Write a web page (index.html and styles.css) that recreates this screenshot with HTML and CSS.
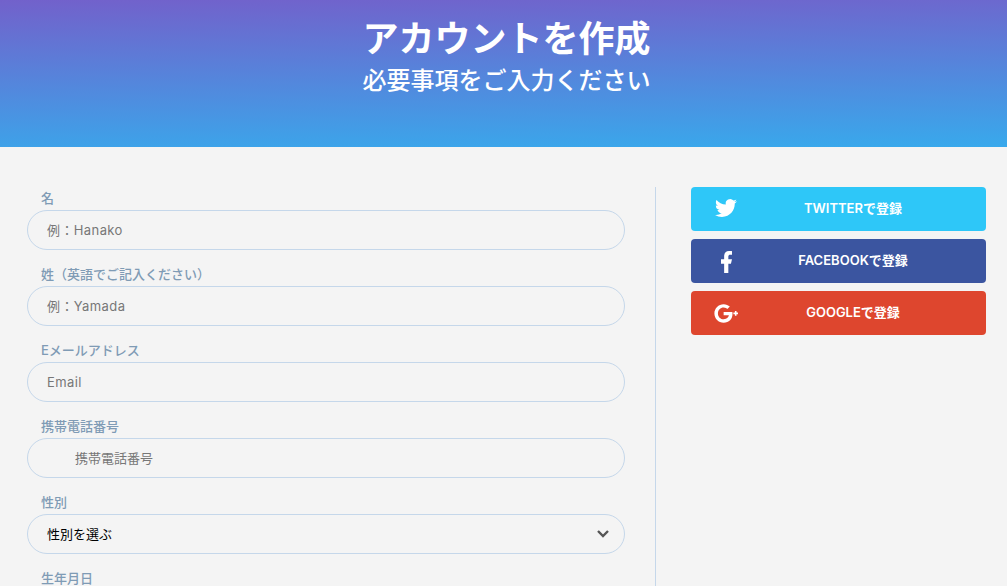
FILE: index.html
```html
<!DOCTYPE html>
<html lang="ja">
<head>
<meta charset="utf-8">
<title>アカウントを作成</title>
<link rel="stylesheet" href="styles.css">
</head>
<body>
<header class="hero">
  <h1 class="hero-title">アカウントを作成</h1>
  <p class="hero-sub">必要事項をご入力ください</p>
</header>
<main class="page">
  <form class="form-col">
    <div class="field">
      <label class="field-label">名</label>
      <input class="field-input" type="text" placeholder="例：Hanako">
    </div>
    <div class="field">
      <label class="field-label">姓（英語でご記入ください）</label>
      <input class="field-input" type="text" placeholder="例：Yamada">
    </div>
    <div class="field">
      <label class="field-label">Eメールアドレス</label>
      <input class="field-input" type="text" placeholder="Email">
    </div>
    <div class="field">
      <label class="field-label">携帯電話番号</label>
      <input class="field-input field-input-phone" type="text" placeholder="携帯電話番号">
    </div>
    <div class="field">
      <label class="field-label">性別</label>
      <div class="select-wrap">
        <select class="field-input field-select">
          <option>性別を選ぶ</option>
        </select>
        <svg class="select-chevron" viewBox="0 0 14 10" aria-hidden="true"><path d="M2 2l5 5 5-5" fill="none" stroke="#555" stroke-width="2.4"/></svg>
      </div>
    </div>
    <div class="field">
      <label class="field-label">生年月日</label>
    </div>
  </form>
  <aside class="social-col">
    <a class="social-btn twitter">
      <span class="social-icon">
        <svg class="icon-tw" viewBox="0 0 24 24"><path fill="#fff" d="M23.953 4.57a10 10 0 01-2.825.775 4.958 4.958 0 002.163-2.723c-.951.555-2.005.959-3.127 1.184a4.92 4.92 0 00-8.384 4.482C7.69 8.095 4.067 6.13 1.64 3.162a4.822 4.822 0 00-.666 2.475c0 1.71.87 3.213 2.188 4.096a4.904 4.904 0 01-2.228-.616v.06a4.923 4.923 0 003.946 4.827 4.996 4.996 0 01-2.212.085 4.936 4.936 0 004.604 3.417 9.867 9.867 0 01-6.102 2.105c-.39 0-.779-.023-1.17-.067a13.995 13.995 0 007.557 2.209c9.053 0 13.998-7.496 13.998-13.985 0-.21 0-.42-.015-.63A9.935 9.935 0 0024 4.59z"/></svg>
      </span>
      <span class="social-text">TWITTERで登録</span>
    </a>
    <a class="social-btn facebook">
      <span class="social-icon">
        <svg class="icon-fb" viewBox="7 2 10.5 20" preserveAspectRatio="none"><path fill="#fff" d="M14 13.5h2.5l1-4H14v-2c0-1.03 0-2 2-2h1.5V2.14c-.326-.043-1.557-.14-2.857-.14C11.928 2 10 3.657 10 6.7v2.8H7v4h3V22h4v-8.5z"/></svg>
      </span>
      <span class="social-text">FACEBOOKで登録</span>
    </a>
    <a class="social-btn google">
      <span class="social-icon">
        <svg class="icon-gp" viewBox="0 0 24 20"><path fill="#fff" transform="translate(0.4 -5.1) scale(1.21)" d="M7.635 10.909v2.619h4.335c-.173 1.125-1.31 3.295-4.331 3.295-2.604 0-4.731-2.16-4.731-4.823 0-2.662 2.122-4.822 4.728-4.822 1.485 0 2.479.633 3.045 1.178l2.073-1.994c-1.33-1.245-3.056-1.995-5.115-1.995C3.412 4.365 0 7.785 0 12s3.414 7.635 7.635 7.635c4.41 0 7.332-3.098 7.332-7.461 0-.501-.054-.885-.12-1.265H7.635z"/><path fill="none" stroke="#fff" stroke-width="1.6" d="M19.4 9.4h4.6M21.7 7.1v4.6"/></svg>
      </span>
      <span class="social-text">GOOGLEで登録</span>
    </a>
  </aside>
</main>
</body>
</html>
```

FILE: styles.css
```css
* { box-sizing: border-box; }
html, body { margin: 0; height: 586px; overflow: hidden; }
body {
  background: #f4f4f4;
  font-family: Inter, "Noto Sans CJK JP", sans-serif;
  font-size: 13px;
}
.hero {
  height: 147px;
  background: linear-gradient(179deg, #7261cb 0%, #38a9ec 100%);
  color: #fff;
  text-align: center;
  padding: 15px 0 0 6px;
}
.hero-title {
  margin: 0;
  font-size: 36px;
  line-height: 48px;
  font-weight: 700;
}
.hero-sub {
  margin: 0;
  font-size: 24px;
  line-height: 36px;
  font-weight: 500;
}
.page { display: flex; height: 439px; padding-top: 40px; }
.form-col {
  width: 656px;
  padding: 0 30px 0 27px;
  border-right: 1px solid #c5d7ea;
}
.field { margin-bottom: 13px; }
.field-label {
  display: block;
  height: 23px;
  line-height: 23px;
  padding-left: 14px;
  font-size: 13px;
  font-weight: 500;
  color: #7f9bb5;
}
.field-input {
  display: block;
  width: 100%;
  height: 40px;
  padding: 0 19px;
  border: 1px solid #c5d7ea;
  border-radius: 20px;
  background: transparent;
  font: inherit;
  letter-spacing: 0.4px;
  color: #000;
  outline: none;
}
.field-input::placeholder { color: #777; opacity: 1; }
.field-input-phone { padding-left: 47px; letter-spacing: 0; }
.select-wrap { position: relative; }
.field-select { appearance: none; letter-spacing: 0; }
.select-chevron {
  position: absolute;
  right: 15px;
  top: 15px;
  width: 14px;
  height: 10px;
  pointer-events: none;
}
.social-col {
  flex: 1;
  padding: 0 21px 0 35px;
  display: flex;
  flex-direction: column;
  gap: 8px;
}
.social-btn {
  display: flex;
  align-items: center;
  height: 44px;
  padding: 0 19px 0 24px;
  border-radius: 4px;
  color: #fff;
  font-size: 13px;
  font-weight: 600;
}
.twitter { background: #2ec7f8; }
.facebook { background: #3b55a0; }
.google { background: #de462e; }
.social-icon {
  width: 24px;
  height: 24px;
  display: flex;
  align-items: center;
  justify-content: center;
  margin-bottom: 2px;
}
.icon-tw { width: 22px; height: 22px; margin-left: -2px; }
.icon-fb { width: 11px; height: 22px; margin-left: -2px; margin-top: 4px; }
.icon-gp { width: 24px; height: 20px; margin-left: -2px; margin-top: 4px; }
.social-text { flex: 1; text-align: center; padding-bottom: 4px; }
```
